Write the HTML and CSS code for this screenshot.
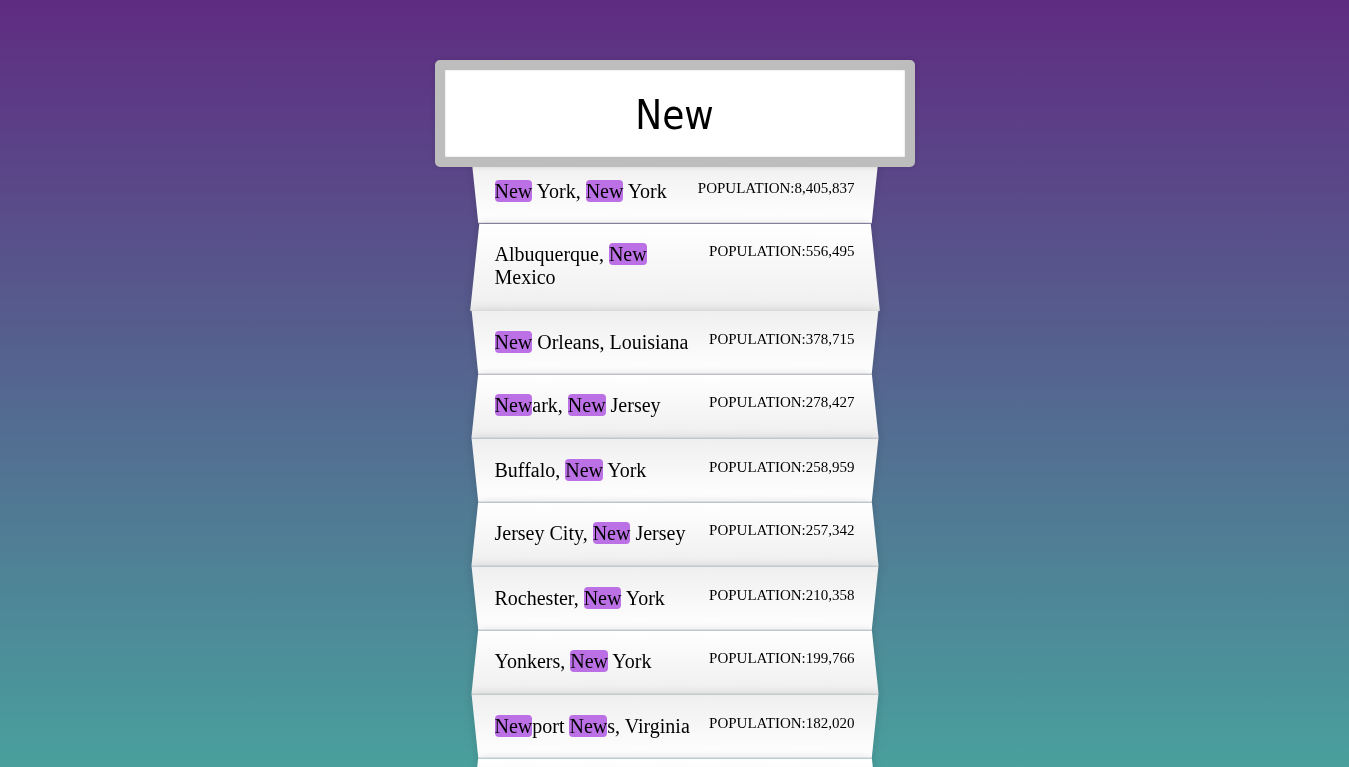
FILE: index.html
```html
<!DOCTYPE html>
<html>
<head>
<meta charset="utf-8">
<title>Type Ahead</title>
<link rel="stylesheet" href="styles.css">
</head>
<body>
<form class="search-form">
  <input type="text" class="search" value="New">
  <ul class="suggestions">
    <li><span class="name"><span class="hl">New</span> York, <span class="hl">New</span> York</span><span class="population">POPULATION:8,405,837</span></li>
    <li><span class="name">Albuquerque, <span class="hl">New</span> Mexico</span><span class="population">POPULATION:556,495</span></li>
    <li><span class="name"><span class="hl">New</span> Orleans, Louisiana</span><span class="population">POPULATION:378,715</span></li>
    <li><span class="name"><span class="hl">New</span>ark, <span class="hl">New</span> Jersey</span><span class="population">POPULATION:278,427</span></li>
    <li><span class="name">Buffalo, <span class="hl">New</span> York</span><span class="population">POPULATION:258,959</span></li>
    <li><span class="name">Jersey City, <span class="hl">New</span> Jersey</span><span class="population">POPULATION:257,342</span></li>
    <li><span class="name">Rochester, <span class="hl">New</span> York</span><span class="population">POPULATION:210,358</span></li>
    <li><span class="name">Yonkers, <span class="hl">New</span> York</span><span class="population">POPULATION:199,766</span></li>
    <li><span class="name"><span class="hl">New</span>port <span class="hl">New</span>s, Virginia</span><span class="population">POPULATION:182,020</span></li>
    <li><span class="name">Paterson, <span class="hl">New</span> Jersey</span><span class="population">POPULATION:145,948</span></li>
    <li><span class="name">Syracuse, <span class="hl">New</span> York</span><span class="population">POPULATION:144,669</span></li>
  </ul>
</form>
</body>
</html>
```

FILE: styles.css
```css
html {
  box-sizing: border-box;
  background: linear-gradient(to bottom, #5f2c82 0%, #49a09d 100%) fixed;
  min-height: 100%;
  font-family: "Liberation Serif", "Times New Roman", serif;
  font-size: 20px;
  font-weight: 400;
}

*, *::before, *::after {
  box-sizing: inherit;
}

body {
  margin: 0;
  padding-top: 1px;
}

.search-form {
  max-width: 400px;
  margin: 49px auto 50px;
}

input {
  width: 100%;
  padding: 20px;
}

input.search {
  display: block;
  margin: 0;
  padding: 22px 20px 18px;
  text-align: center;
  outline: 0;
  border: 10px solid #bdbdbd;
  width: 120%;
  left: -10%;
  position: relative;
  top: 10px;
  z-index: 2;
  border-radius: 5px;
  font-family: "DejaVu Sans Condensed", "Liberation Sans", Arial, sans-serif;
  font-size: 40px;
  line-height: 47px;
  color: #000;
  background: #fff;
  box-shadow: 0 0 5px rgba(0, 0, 0, 0.12), inset 0 0 2px rgba(0, 0, 0, 0.19);
}

.suggestions {
  margin: 0;
  padding: 0;
  position: relative;
}

.suggestions li {
  position: relative;
  list-style: none;
  margin: 0;
  padding: 20px 20px 21px;
  display: flex;
  justify-content: space-between;
  color: #000;
}

.suggestions li::before {
  content: "";
  position: absolute;
  inset: 0;
  z-index: -1;
  border-bottom: 1px solid #d8d8d8;
  box-shadow: 0 0 10px rgba(0, 0, 0, 0.14);
}

.suggestions li:nth-child(even) {
  transform: translateY(2px);
}

.suggestions li:nth-child(even)::before {
  transform: perspective(100px) rotateX(3deg) scale(1.001);
  background: linear-gradient(to bottom, #ffffff 0%, #efefef 100%);
}

.suggestions li:nth-child(odd) {
  transform: translateY(3px);
}

.suggestions li:nth-child(odd)::before {
  transform: perspective(100px) rotateX(-3deg);
  background: linear-gradient(to top, #ffffff 0%, #efefef 100%);
}

.population {
  font-size: 15px;
  flex-shrink: 0;
}

.hl {
  background: #bb70e6;
  border-radius: 4px;
}
```
